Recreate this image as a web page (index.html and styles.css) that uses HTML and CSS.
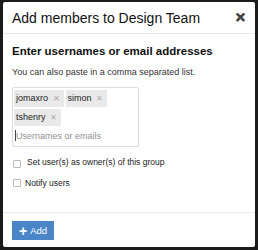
FILE: index.html
```html
<!DOCTYPE html>
<html lang="en">
  <head>
    <meta charset="UTF-8" />
    <meta name="viewport" content="width=device-width, initial-scale=1.0" />
    <title>Add members</title>
    <link rel="stylesheet" href="styles.css">
  </head>
  <body>
    <div class="modal">
      <div class="modal-header">
        <h2>Add members to Design Team</h2>
        <span class="close">&#x2715;</span>
      </div>
      <div class="modal-body">
        <h3>Enter usernames or email addresses</h3>
        <p class="hint">You can also paste in a comma separated list.</p>
        <div class="user-input">
          <span class="chip">jomaxro <span class="chip-x">&#x2715;</span></span>
          <span class="chip">simon <span class="chip-x">&#x2715;</span></span>
          <span class="chip">tshenry <span class="chip-x">&#x2715;</span></span>
          <span class="placeholder"><span class="caret"></span>Usernames or emails</span>
        </div>
        <label class="check owner"><span class="box"></span>Set user(s) as owner(s) of this group</label>
        <label class="check"><span class="box"></span>Notify users</label>
      </div>
      <div class="modal-footer">
        <button class="btn-add"><span class="plus">+</span>Add</button>
      </div>
    </div>
  </body>
</html>
```

FILE: styles.css
```css
html, body {
  margin: 0;
  height: 100%;
}

body {
  background: #1b1b1b;
  font-family: "Liberation Sans", Arial, sans-serif;
  color: #222;
  padding: 2px 3px 3px 3px;
  box-sizing: border-box;
}

.modal {
  background: #fff;
  height: 100%;
  border-radius: 2px;
  display: flex;
  flex-direction: column;
}

.modal-header {
  display: flex;
  align-items: center;
  justify-content: space-between;
  padding: 0 9px 0 9px;
  height: 31px;
  border-bottom: 1px solid #e9e9e9;
}

.modal-header h2 {
  margin: 0;
  font-size: 14px;
  font-weight: normal;
  color: #111;
}

.close {
  font-size: 13px;
  font-weight: bold;
  color: #444;
  -webkit-text-stroke: 0.6px #444;
}

.modal-body {
  padding: 9px 9px 0 9px;
  flex: 1;
}

.modal-body h3 {
  margin: 0;
  font-size: 11.5px;
  font-weight: bold;
  line-height: 16px;
  color: #111;
}

.hint {
  margin: 7px 0 9px 0;
  font-size: 9px;
  line-height: 12px;
  color: #333;
}

.user-input {
  width: 123px;
  border: 1px solid #ddd;
  border-radius: 2px;
  padding: 2px 1px 3px 1px;
  display: flex;
  flex-wrap: wrap;
  gap: 2px;
  font-size: 9px;
  margin-bottom: 9px;
}

.chip {
  background: #e9e9e9;
  padding: 0 4px 0 2px;
  height: 17px;
  line-height: 17px;
  color: #222;
}

.chip-x {
  color: #aaa;
  font-size: 8px;
  margin-left: 2px;
}

.placeholder {
  width: 100%;
  color: #919191;
  height: 15px;
  padding-left: 1px;
  display: flex;
  align-items: center;
}

.caret {
  width: 1px;
  height: 11px;
  background: #444;
}

.check {
  display: flex;
  align-items: center;
  font-size: 8.5px;
  line-height: 12px;
  color: #222;
  margin-bottom: 9px;
}

.box {
  width: 6px;
  height: 6px;
  border: 1px solid #bbb;
  border-radius: 1px;
  margin: 0 4px 0 1px;
}

.check.owner .box {
  margin-right: 6px;
  margin-top: 4px;
}

.modal-footer {
  border-top: 1px solid #e9e9e9;
  padding: 8px 9px 7px 9px;
}

.btn-add {
  background: #4a86c7;
  color: #fff;
  border: none;
  font-family: "Liberation Sans", Arial, sans-serif;
  font-size: 9.5px;
  height: 19px;
  width: 42px;
  padding: 0;
  display: flex;
  align-items: center;
  justify-content: center;
  gap: 3px;
}

.plus {
  font-size: 14px;
  font-weight: bold;
  line-height: 1;
}
```
